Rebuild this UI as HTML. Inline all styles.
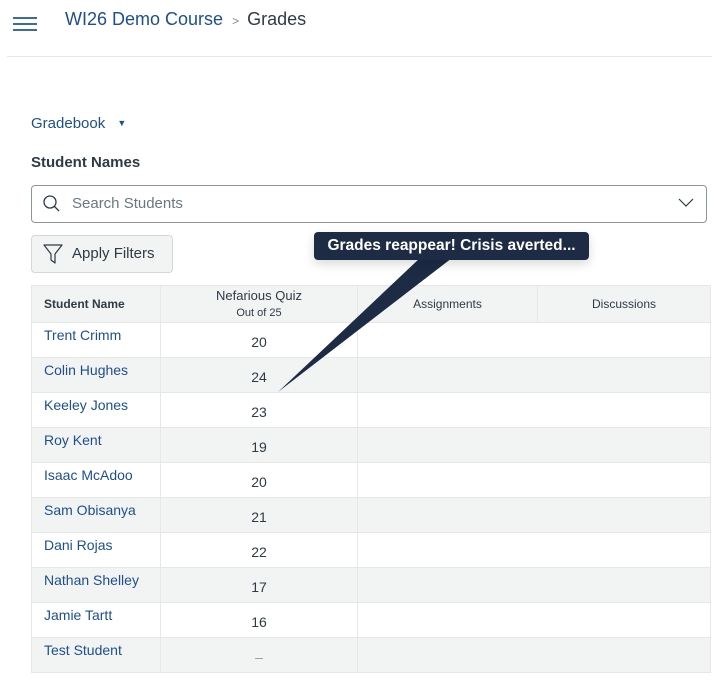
<!DOCTYPE html><html><head><style>
*{box-sizing:border-box;margin:0;padding:0}
body{width:712px;height:682px;background:#fff;font-family:"Liberation Sans",sans-serif;position:relative;overflow:hidden;color:#2d3b45}
.a{position:absolute}
.hb{left:13px;width:24px;height:2px;background:#3c6aa3}
table{position:absolute;left:31px;top:285px;border-collapse:collapse;width:680px;table-layout:fixed}
td,th{border:1px solid #e6e8e8;height:35px;font-size:14px}
th{background:#f2f3f3;font-weight:normal;font-size:12px;height:37px}
tr:nth-child(odd) td{background:#f2f3f3}
td.n{color:#1d4f8e;vertical-align:top;padding:4px 0 0 12px}
td.g{text-align:center;padding-top:3px}
td.c3{border-right:none}
td.c4{border-left:none}
</style></head><body>
<div class="a hb" style="top:17px"></div><div class="a hb" style="top:23px"></div><div class="a hb" style="top:29px"></div>
<div class="a" style="left:65px;top:9px;font-size:18px;color:#1d4f8e">WI26 Demo Course<span style="color:#888;font-size:12px;margin:0 8px 0 9px">&gt;</span><span style="color:#2d3b45">Grades</span></div>
<div class="a" style="left:7px;top:56px;width:705px;height:1px;background:#e4e6e8"></div>
<div class="a" style="left:31px;top:115px;font-size:15px;color:#1d4f8e">Gradebook <span style="font-size:9px;margin-left:8px;color:#1d4f8e;position:relative;top:-2px">▼</span></div>
<div class="a" style="left:31px;top:154px;font-size:15px;font-weight:bold">Student Names</div>
<div class="a" style="left:31px;top:185px;width:676px;height:38px;border:1px solid #8b969e;border-radius:4px"></div>
<svg class="a" style="left:42px;top:194px" width="20" height="20"><circle cx="8" cy="8" r="6" fill="none" stroke="#2d3b45" stroke-width="1.3"/><path d="M12.5 12.5 17 17" stroke="#2d3b45" stroke-width="1.3"/></svg>
<div class="a" style="left:72px;top:195px;font-size:15px;color:#6b7780">Search Students</div>
<svg class="a" style="left:678px;top:197px" width="16" height="12"><path d="M1 2 8 9 15 2" fill="none" stroke="#2d3b45" stroke-width="1.2"/></svg>
<div class="a" style="left:31px;top:235px;width:142px;height:38px;background:#f2f3f3;border:1px solid #d3d7da;border-radius:4px"></div>
<svg class="a" style="left:43px;top:243px" width="20" height="22"><path d="M1 2H19L12 11V20L8 17V11Z" fill="none" stroke="#2d3b45" stroke-width="1.2" stroke-linejoin="round"/></svg>
<div class="a" style="left:72px;top:245px;font-size:15px">Apply Filters</div>
<table>
<colgroup><col style="width:129px"><col style="width:197px"><col style="width:180px"><col></colgroup>
<tr><th style="text-align:left;padding-left:12px;font-weight:bold">Student Name</th><th style="line-height:16px"><span style="font-size:13px">Nefarious Quiz</span><br><span style="font-size:11px">Out of 25</span></th><th>Assignments</th><th>Discussions</th></tr>
<tr><td class="n">Trent Crimm</td><td class="g">20</td><td class="c3"></td><td class="c4"></td></tr>
<tr><td class="n">Colin Hughes</td><td class="g">24</td><td class="c3"></td><td class="c4"></td></tr>
<tr><td class="n">Keeley Jones</td><td class="g">23</td><td class="c3"></td><td class="c4"></td></tr>
<tr><td class="n">Roy Kent</td><td class="g">19</td><td class="c3"></td><td class="c4"></td></tr>
<tr><td class="n">Isaac McAdoo</td><td class="g">20</td><td class="c3"></td><td class="c4"></td></tr>
<tr><td class="n">Sam Obisanya</td><td class="g">21</td><td class="c3"></td><td class="c4"></td></tr>
<tr><td class="n">Dani Rojas</td><td class="g">22</td><td class="c3"></td><td class="c4"></td></tr>
<tr><td class="n">Nathan Shelley</td><td class="g">17</td><td class="c3"></td><td class="c4"></td></tr>
<tr><td class="n">Jamie Tartt</td><td class="g">16</td><td class="c3"></td><td class="c4"></td></tr>
<tr><td class="n">Test Student</td><td class="g" style="color:#999">–</td><td class="c3"></td><td class="c4"></td></tr>
</table>
<svg class="a" style="left:0;top:0" width="712" height="682"><path d="M420 258 L278 392 L452 258Z" fill="#1d2b45"/></svg>
<div class="a" style="left:314px;top:232px;width:275px;height:28px;background:#1d2b45;border-radius:4px;color:#fff;font-weight:bold;font-size:15.5px;line-height:28px;text-align:center;box-shadow:0 4px 10px rgba(0,0,0,.15)">Grades reappear! Crisis averted...</div>
</body></html>
